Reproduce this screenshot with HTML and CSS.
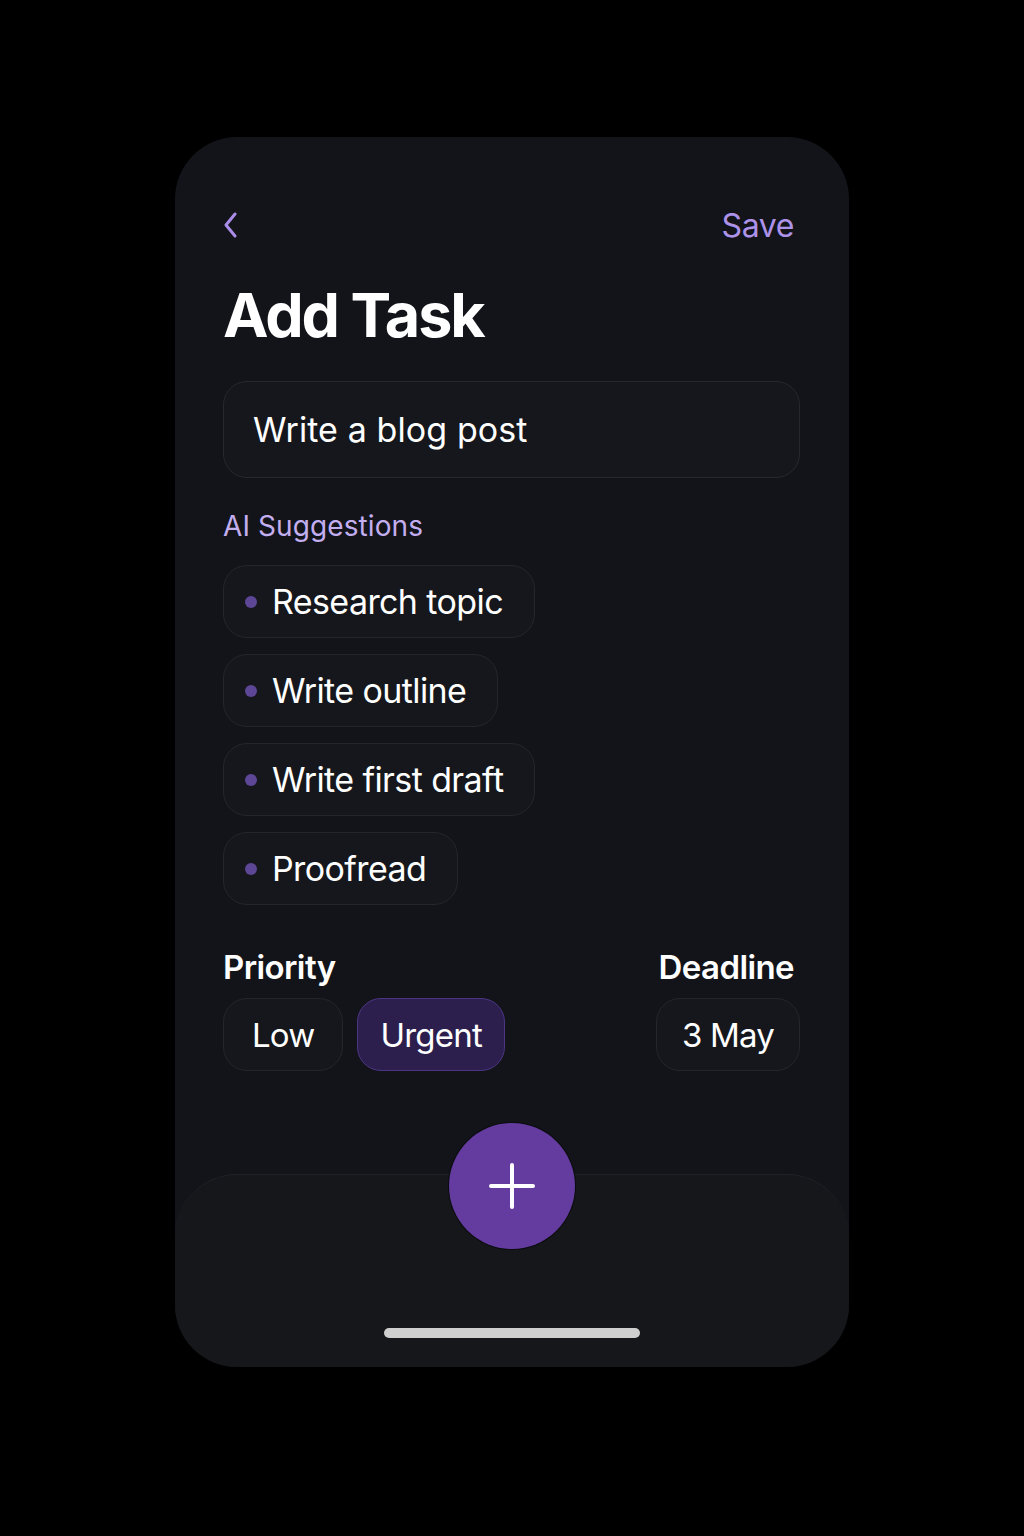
FILE: index.html
```html
<!DOCTYPE html>
<html lang="en">
<head>
<meta charset="utf-8">
<title>Add Task</title>
<link rel="stylesheet" href="styles.css">
</head>
<body>
<div class="phone">
  <div class="content">
    <div class="topbar">
      <button class="back" aria-label="Back">
        <svg width="16" height="26" viewBox="0 0 16 26"><path d="M12 2 L3 13 L12 24" fill="none" stroke="#a98be8" stroke-width="3" stroke-linecap="round" stroke-linejoin="round"/></svg>
      </button>
      <span class="save">Save</span>
    </div>
    <h1 class="title">Add Task</h1>
    <div class="input">Write a blog post</div>
    <div class="section-label">AI Suggestions</div>
    <div class="chips">
      <div class="chip"><span class="dot"></span>Research topic</div>
      <div class="chip"><span class="dot"></span>Write outline</div>
      <div class="chip"><span class="dot"></span>Write first draft</div>
      <div class="chip"><span class="dot"></span>Proofread</div>
    </div>
    <div class="meta">
      <div class="group">
        <div class="meta-label">Priority</div>
        <div class="pills">
          <div class="pill">Low</div>
          <div class="pill active">Urgent</div>
        </div>
      </div>
      <div class="group right">
        <div class="meta-label">Deadline</div>
        <div class="pills">
          <div class="pill date">3 May</div>
        </div>
      </div>
    </div>
  </div>
  <div class="bottom">
    <button class="fab" aria-label="Add">
      <svg width="48" height="48" viewBox="0 0 48 48"><path d="M24 3 V45 M3 24 H45" stroke="#ffffff" stroke-width="4" stroke-linecap="round"/></svg>
    </button>
    <div class="home"></div>
  </div>
</div>
</body>
</html>
```
FILE: styles.css
```css
* { box-sizing: border-box; }
html, body { margin: 0; padding: 0; }
body {
  background: #000;
  width: 1024px;
  height: 1536px;
  font-family: Inter, "Noto Sans", sans-serif;
  color: #fff;
}
.phone {
  width: 674px;
  height: 1230px;
  margin: 137px auto 0;
  background: #121419;
  border-radius: 62px;
  overflow: hidden;
  display: flex;
  flex-direction: column;
}
.content {
  padding: 68px 49px 0 48px;
}
.topbar {
  height: 40px;
  display: flex;
  align-items: center;
  justify-content: space-between;
}
.back {
  background: none;
  border: 0;
  padding: 0;
  display: flex;
  align-items: center;
}
.save {
  color: #ad92ea;
  font-size: 32px;
  margin-right: 6px;
  letter-spacing: -0.4px;
}
.title {
  margin: 32px 0 0;
  font-size: 61px;
  line-height: 76px;
  font-weight: 700;
  letter-spacing: -2px;
}
.input {
  margin-top: 28px;
  height: 97px;
  border: 1.5px solid #26282e;
  background: #15171c;
  border-radius: 24px;
  padding: 0 29px;
  display: flex;
  align-items: center;
  font-size: 34px;
  letter-spacing: 0.1px;
}
.section-label {
  margin-top: 30px;
  font-size: 28px;
  color: #c3aef0;
  line-height: 36px;
  letter-spacing: 0.1px;
}
.chips {
  margin-top: 21px;
  display: flex;
  flex-direction: column;
  align-items: flex-start;
  gap: 16px;
}
.chip {
  height: 73px;
  padding: 0 31px 0 21px;
  border: 1.5px solid #24262c;
  background: #15171c;
  border-radius: 24px;
  display: flex;
  align-items: center;
  font-size: 34px;
  letter-spacing: -0.6px;
}
.dot {
  width: 12px;
  height: 12px;
  border-radius: 50%;
  background: #5e4697;
  margin-right: 15px;
}
.meta {
  margin-top: 40px;
  display: flex;
  justify-content: space-between;
}
.group { display: flex; flex-direction: column; }
.group.right { align-items: flex-end; }
.meta-label {
  font-size: 33px;
  font-weight: 600;
  line-height: 44px;
  letter-spacing: -0.6px;
  margin-right: 6px;
}
.group:first-child .meta-label { margin-right: 0; }
.pills {
  margin-top: 9px;
  display: flex;
  gap: 14px;
}
.pill {
  height: 73px;
  padding: 0 28px;
  border: 1.5px solid #24262c;
  background: #15171c;
  border-radius: 24px;
  display: flex;
  align-items: center;
  font-size: 33px;
  letter-spacing: -0.8px;
}
.pill.active {
  background: #2c1f4e;
  border-color: #4d3584;
  padding: 0 22px;
}
.pill.date { padding: 0 25px; }
.bottom {
  margin-top: auto;
  height: 193px;
  position: relative;
  background: #15171b;
  border-top: 1.5px solid #202228;
  border-radius: 62px 62px 0 0;
  display: flex;
  justify-content: center;
}
.fab {
  position: absolute;
  left: 50%;
  top: -52px;
  width: 126px;
  height: 126px;
  margin-left: -63px;
  border-radius: 50%;
  border: 0;
  background: #643ca0;
  display: flex;
  align-items: center;
  justify-content: center;
  padding: 0;
  box-shadow: 0 0 0 1px #0b0c0f;
}
.home {
  position: absolute;
  bottom: 29px;
  left: 50%;
  margin-left: -128px;
  width: 256px;
  height: 10px;
  border-radius: 5px;
  background: #cfcfcf;
}
```
